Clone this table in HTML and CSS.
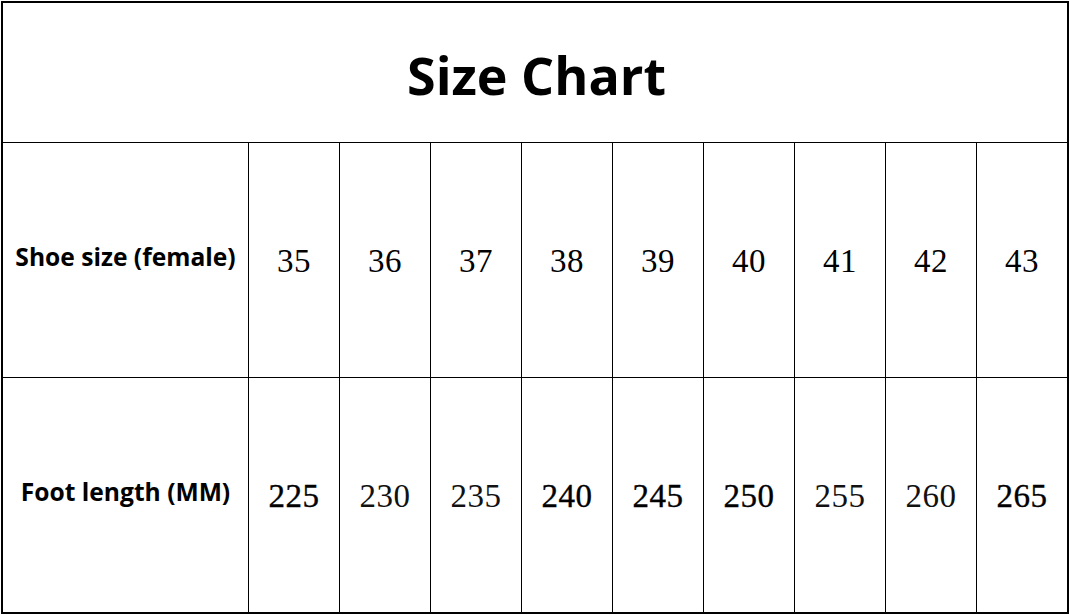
FILE: index.html
```html
<!DOCTYPE html>
<html>
<head>
<meta charset="utf-8">
<link rel="stylesheet" href="styles.css">
</head>
<body>
<div class="chart">
  <div class="title">Size Chart</div>
  <div class="row">
    <div class="label">Shoe size (female)</div>
    <div class="cell">35</div>
    <div class="cell">36</div>
    <div class="cell">37</div>
    <div class="cell">38</div>
    <div class="cell">39</div>
    <div class="cell">40</div>
    <div class="cell">41</div>
    <div class="cell">42</div>
    <div class="cell">43</div>
  </div>
  <div class="row">
    <div class="label">Foot length (MM)</div>
    <div class="cell heavy">225</div>
    <div class="cell light">230</div>
    <div class="cell light">235</div>
    <div class="cell heavy">240</div>
    <div class="cell heavy">245</div>
    <div class="cell heavy">250</div>
    <div class="cell light">255</div>
    <div class="cell light">260</div>
    <div class="cell heavy">265</div>
  </div>
</div>
</body>
</html>
```
FILE: styles.css
```css
html, body {
  margin: 0;
  padding: 0;
  background: #ffffff;
}
.chart {
  margin: 1px;
  width: 1064px;
  border: 2px solid #000;
  display: flex;
  flex-direction: column;
  color: #000;
}
.title {
  height: 139px;
  display: flex;
  align-items: center;
  justify-content: center;
  font-family: "Open Sans", sans-serif;
  font-weight: 700;
  font-size: 52px;
  padding-top: 4px;
  padding-left: 3px;
  box-sizing: border-box;
}
.row {
  display: grid;
  grid-template-columns: 245px repeat(9, 91px);
  height: 235px;
  border-top: 1px solid #000;
  box-sizing: border-box;
}
.label {
  display: flex;
  align-items: center;
  justify-content: center;
  font-family: "Open Sans", sans-serif;
  font-weight: 700;
  font-size: 24.6px;
  padding-bottom: 8px;
}
.cell {
  border-left: 1px solid #000;
  display: flex;
  align-items: center;
  justify-content: center;
  font-family: "Liberation Serif", serif;
  font-size: 33px;
  letter-spacing: 0.5px;
  padding-top: 2px;
}
.heavy {
  -webkit-text-stroke: 0.35px #000;
}
.light {
  color: #111;
}
```
